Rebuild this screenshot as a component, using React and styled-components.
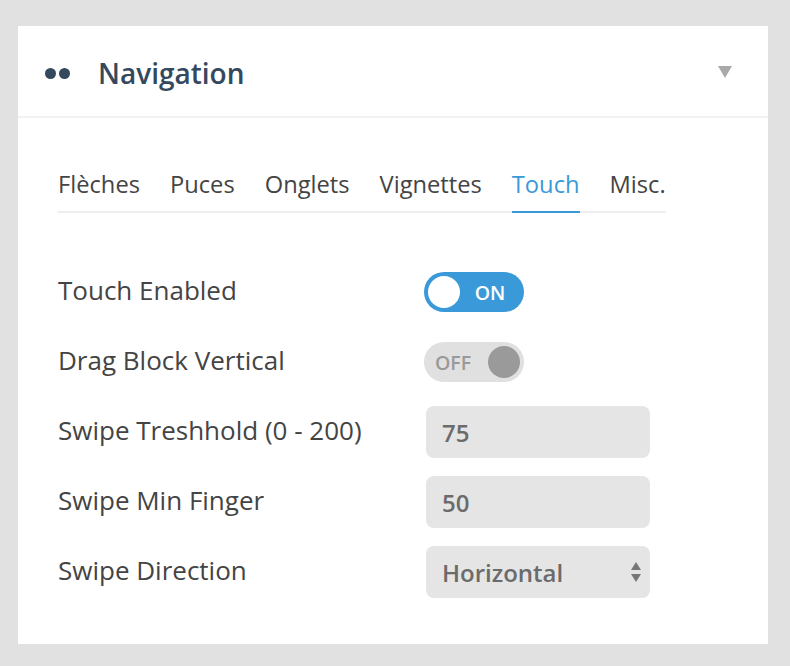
import React, { useState } from 'react';
import styled, { createGlobalStyle } from 'styled-components';

const GlobalStyle = createGlobalStyle`
  html, body {
    margin: 0;
    padding: 0;
    background: #e1e1e1;
    font-family: 'Open Sans', 'Noto Sans', sans-serif;
  }
`;

const Page = styled.div`
  padding: 26px 22px 22px 18px;
`;

const Card = styled.div`
  width: 750px;
  height: 618px;
  background: #fff;
  box-sizing: border-box;
`;

const Header = styled.div`
  height: 92px;
  box-sizing: border-box;
  display: flex;
  align-items: center;
  padding: 4px 36px 0 27px;
  border-bottom: 2px solid #f1f1f1;
`;

const Dots = styled.div`
  display: flex;
  gap: 3px;
  margin-right: 28px;
`;

const Dot = styled.span`
  width: 11px;
  height: 11px;
  border-radius: 50%;
  background: #34495e;
`;

const Title = styled.h2`
  margin: 0;
  flex: 1;
  font-size: 28px;
  font-weight: 600;
  color: #34495e;
`;

const Caret = styled.span`
  width: 0;
  height: 0;
  border-left: 7px solid transparent;
  border-right: 7px solid transparent;
  border-top: 12px solid #a9a9a9;
  margin-top: -2px;
`;

const Body = styled.div`
  padding: 50px 40px 0 40px;
`;

const Tabs = styled.div`
  display: inline-flex;
  gap: 30px;
  border-bottom: 2px solid #eee;
`;

const Tab = styled.div`
  font-size: 23.7px;
  color: ${p => (p.$active ? '#3a9ad9' : '#444')};
  padding-bottom: 11px;
  margin-bottom: -2px;
  border-bottom: 2px solid ${p => (p.$active ? '#3a9ad9' : 'transparent')};
  cursor: pointer;
`;

const Form = styled.div`
  margin-top: 44px;
  display: grid;
  grid-template-columns: 366px 226px;
  grid-auto-rows: 70px;
  align-items: center;
`;

const Label = styled.div`
  font-size: 26px;
  color: #444;
  margin-top: -5px;
`;

const ToggleBox = styled.div`
  width: 100px;
  height: 40px;
  border-radius: 20px;
  background: ${p => (p.$on ? '#3a9ad9' : '#e0e0e0')};
  display: flex;
  align-items: center;
  flex-direction: ${p => (p.$on ? 'row' : 'row-reverse')};
  padding: 0 4px;
  box-sizing: border-box;
  cursor: pointer;
`;

const Knob = styled.span`
  width: 32px;
  height: 32px;
  border-radius: 50%;
  background: ${p => (p.$on ? '#fff' : '#9a9a9a')};
`;

const ToggleText = styled.span`
  flex: 1;
  text-align: center;
  font-size: 19.5px;
  font-weight: 600;
  margin-right: ${p => (p.$on ? '0' : '10px')};
  color: ${p => (p.$on ? '#fff' : '#999')};
`;

const Field = styled.div`
  position: relative;
  width: 224px;
  height: 52px;
  margin-left: 2px;
  border-radius: 8px;
  background: #e5e5e5;
  display: flex;
  align-items: center;
  padding: 0 16px;
  box-sizing: border-box;
  font-size: 24px;
  font-weight: 600;
  color: #6b6b6b;
`;

const Arrows = styled.svg`
  position: absolute;
  right: 9px;
  top: 50%;
  transform: translateY(-50%);
`;

function Toggle({ on, onClick }) {
  return (
    <ToggleBox $on={on} onClick={onClick}>
      <Knob $on={on} />
      <ToggleText $on={on}>{on ? 'ON' : 'OFF'}</ToggleText>
    </ToggleBox>
  );
}

const tabs = ['Flèches', 'Puces', 'Onglets', 'Vignettes', 'Touch', 'Misc.'];

export default function App() {
  const [active, setActive] = useState('Touch');
  const [touch, setTouch] = useState(true);
  const [drag, setDrag] = useState(false);

  return (
    <Page>
      <GlobalStyle />
      <Card>
        <Header>
          <Dots>
            <Dot />
            <Dot />
          </Dots>
          <Title>Navigation</Title>
          <Caret />
        </Header>
        <Body>
          <Tabs>
            {tabs.map(t => (
              <Tab key={t} $active={t === active} onClick={() => setActive(t)}>
                {t}
              </Tab>
            ))}
          </Tabs>
          <Form>
            <Label>Touch Enabled</Label>
            <Toggle on={touch} onClick={() => setTouch(!touch)} />
            <Label>Drag Block Vertical</Label>
            <Toggle on={drag} onClick={() => setDrag(!drag)} />
            <Label>Swipe Treshhold (0 - 200)</Label>
            <Field>75</Field>
            <Label>Swipe Min Finger</Label>
            <Field>50</Field>
            <Label>Swipe Direction</Label>
            <Field>
              Horizontal
              <Arrows width="10" height="22" viewBox="0 0 10 22">
                <path d="M5 1 L10 9 L0 9 Z" fill="#777" />
                <path d="M5 21 L10 13 L0 13 Z" fill="#777" />
              </Arrows>
            </Field>
          </Form>
        </Body>
      </Card>
    </Page>
  );
}
